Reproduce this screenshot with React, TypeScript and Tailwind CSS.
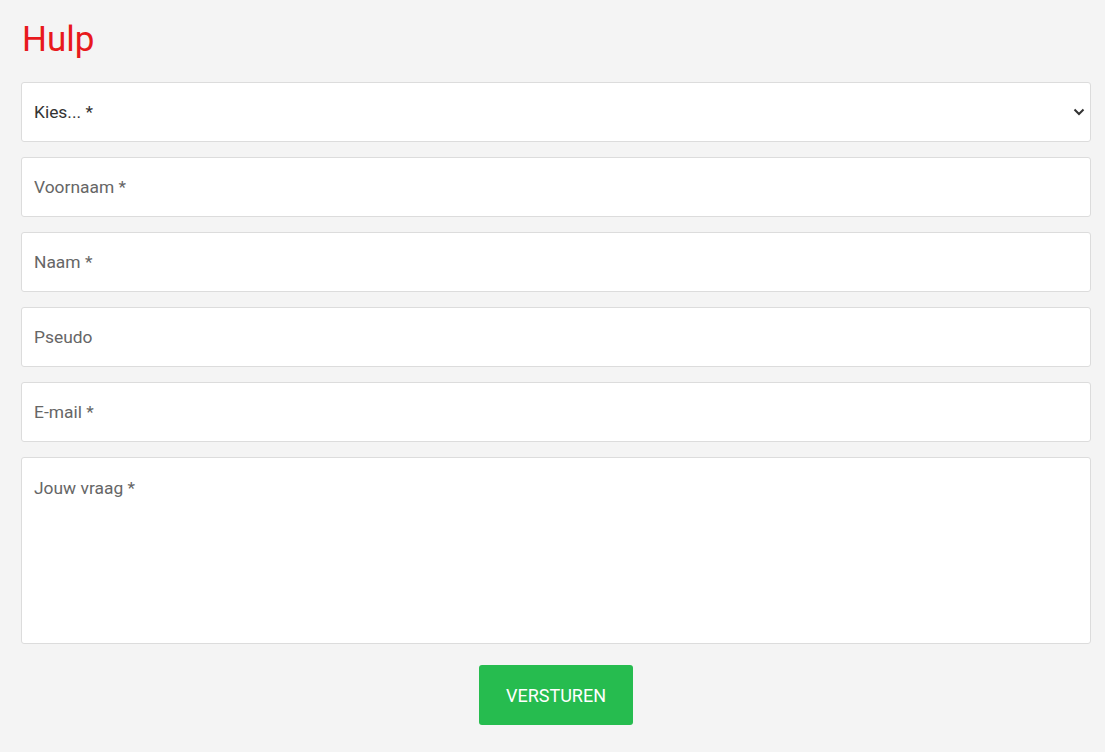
import React from "react";

const fieldClass =
  "w-full h-[60px] rounded-[3px] border border-[#dcdcdc] bg-white px-[12px] text-[17.4px] text-[#333] placeholder:text-[#666] outline-none";

const App: React.FC = () => {
  return (
    <div
      className="min-h-[752px] bg-[#f4f4f4] pl-[21px] pr-[14px] pt-[17px] pb-[27px]"
      style={{ fontFamily: "Roboto, 'Liberation Sans', sans-serif" }}
    >
      <h1 className="text-[35px] leading-[46px] text-[#e8191d] font-normal ml-[1px] mb-[19px]">
        Hulp
      </h1>
      <form className="flex flex-col gap-[15px]">
        <div className="relative">
          <select className={`${fieldClass} appearance-none text-[#333]`} defaultValue="">
            <option value="">Kies... *</option>
          </select>
          <svg
            className="pointer-events-none absolute right-[6px] top-[25px]"
            width="12"
            height="9"
            viewBox="0 0 12 9"
            fill="none"
          >
            <path d="M1.5 2.5 L6 7 L10.5 2.5" stroke="#333" strokeWidth="2" />
          </svg>
        </div>
        <input className={fieldClass} placeholder="Voornaam *" />
        <input className={fieldClass} placeholder="Naam *" />
        <input className={fieldClass} placeholder="Pseudo" />
        <input className={fieldClass} placeholder="E-mail *" />
        <textarea
          className={`${fieldClass} h-[187px] pt-[17px] resize-none`}
          placeholder="Jouw vraag *"
        />
        <div className="flex justify-center mt-[6px]">
          <button
            type="button"
            className="w-[154px] h-[60px] rounded-[3px] bg-[#26bc4f] text-white text-[18px] uppercase"
          >
            Versturen
          </button>
        </div>
      </form>
    </div>
  );
};

export default App;
